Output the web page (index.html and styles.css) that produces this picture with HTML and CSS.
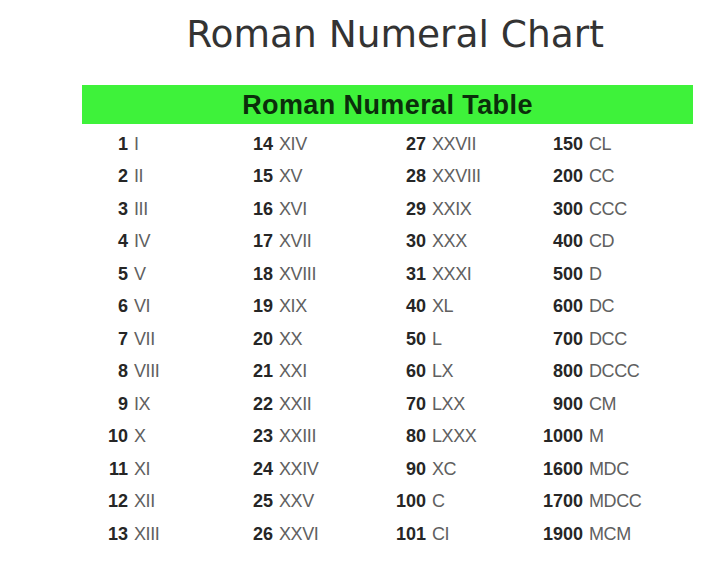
FILE: index.html
```html
<!DOCTYPE html>
<html>
<head>
<meta charset="utf-8">
<link rel="stylesheet" href="styles.css">
</head>
<body>
<div class="page">
  <h1 class="title">Roman Numeral Chart</h1>
  <div class="bar">Roman Numeral Table</div>
  <div class="grid">
    <span class="n">1</span><span class="r">I</span><span class="n">14</span><span class="r">XIV</span><span class="n">27</span><span class="r">XXVII</span><span class="n">150</span><span class="r">CL</span>
    <span class="n">2</span><span class="r">II</span><span class="n">15</span><span class="r">XV</span><span class="n">28</span><span class="r">XXVIII</span><span class="n">200</span><span class="r">CC</span>
    <span class="n">3</span><span class="r">III</span><span class="n">16</span><span class="r">XVI</span><span class="n">29</span><span class="r">XXIX</span><span class="n">300</span><span class="r">CCC</span>
    <span class="n">4</span><span class="r">IV</span><span class="n">17</span><span class="r">XVII</span><span class="n">30</span><span class="r">XXX</span><span class="n">400</span><span class="r">CD</span>
    <span class="n">5</span><span class="r">V</span><span class="n">18</span><span class="r">XVIII</span><span class="n">31</span><span class="r">XXXI</span><span class="n">500</span><span class="r">D</span>
    <span class="n">6</span><span class="r">VI</span><span class="n">19</span><span class="r">XIX</span><span class="n">40</span><span class="r">XL</span><span class="n">600</span><span class="r">DC</span>
    <span class="n">7</span><span class="r">VII</span><span class="n">20</span><span class="r">XX</span><span class="n">50</span><span class="r">L</span><span class="n">700</span><span class="r">DCC</span>
    <span class="n">8</span><span class="r">VIII</span><span class="n">21</span><span class="r">XXI</span><span class="n">60</span><span class="r">LX</span><span class="n">800</span><span class="r">DCCC</span>
    <span class="n">9</span><span class="r">IX</span><span class="n">22</span><span class="r">XXII</span><span class="n">70</span><span class="r">LXX</span><span class="n">900</span><span class="r">CM</span>
    <span class="n">10</span><span class="r">X</span><span class="n">23</span><span class="r">XXIII</span><span class="n">80</span><span class="r">LXXX</span><span class="n">1000</span><span class="r">M</span>
    <span class="n">11</span><span class="r">XI</span><span class="n">24</span><span class="r">XXIV</span><span class="n">90</span><span class="r">XC</span><span class="n">1600</span><span class="r">MDC</span>
    <span class="n">12</span><span class="r">XII</span><span class="n">25</span><span class="r">XXV</span><span class="n">100</span><span class="r">C</span><span class="n">1700</span><span class="r">MDCC</span>
    <span class="n">13</span><span class="r">XIII</span><span class="n">26</span><span class="r">XXVI</span><span class="n">101</span><span class="r">CI</span><span class="n">1900</span><span class="r">MCM</span>
  </div>
</div>
</body>
</html>
```
FILE: styles.css
```css
html, body {
  margin: 0;
  padding: 0;
  background: #ffffff;
}
.page {
  width: 611px;
  margin-left: 82px;
  padding-top: 12px;
}
.title {
  margin: 0;
  padding-left: 15px;
  text-align: center;
  font-family: "DejaVu Sans", sans-serif;
  font-weight: normal;
  font-size: 37.5px;
  line-height: 44px;
  color: #333333;
}
.bar {
  margin-top: 29px;
  height: 39px;
  line-height: 40px;
  background: #3ef23a;
  text-align: center;
  font-family: "Liberation Sans", Arial, sans-serif;
  font-weight: bold;
  font-size: 27px;
  letter-spacing: 0.4px;
  color: #0b2e0b;
}
.grid {
  margin-top: 4px;
  display: grid;
  grid-template-columns: 46px 99px 46px 107px 46px 111px 46px auto;
  grid-auto-rows: 32.5px;
  align-items: center;
  font-family: "Liberation Sans", Arial, sans-serif;
  font-size: 18px;
}
.n {
  text-align: right;
  font-weight: bold;
  color: #262626;
}
.r {
  padding-left: 6px;
  color: #606060;
  letter-spacing: -0.4px;
}
```
